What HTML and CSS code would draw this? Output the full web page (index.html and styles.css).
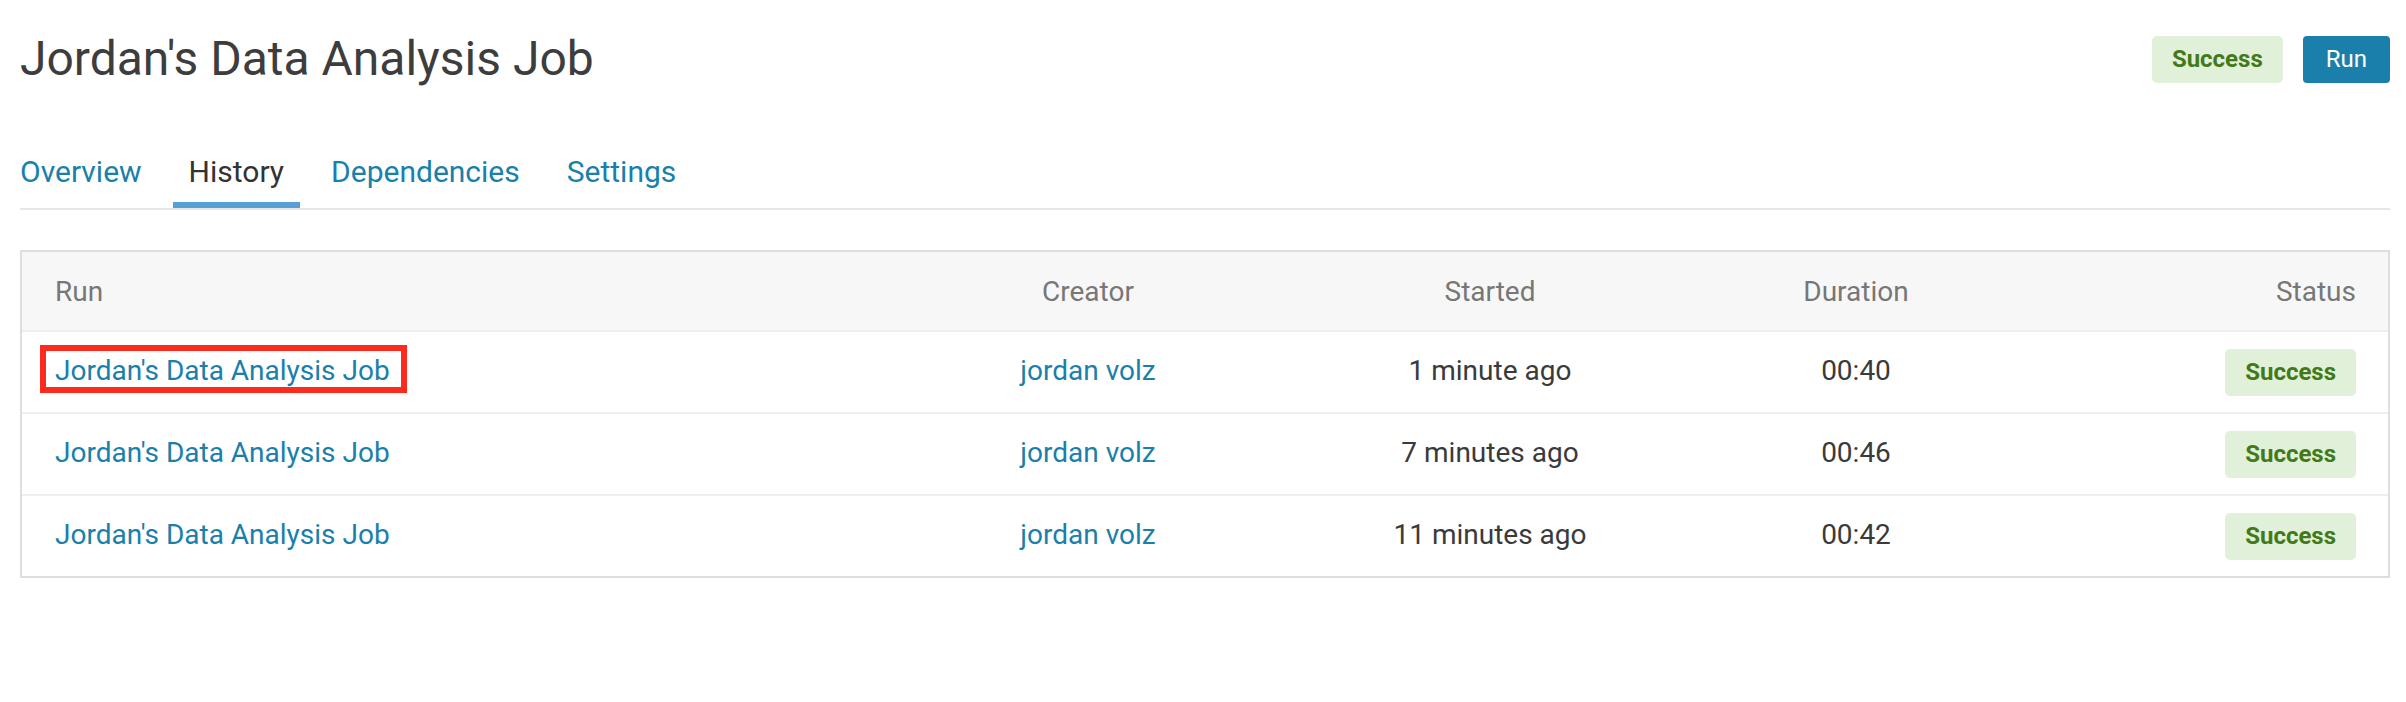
FILE: index.html
```html
<!DOCTYPE html>
<html lang="en">
<head>
<meta charset="utf-8">
<title>Jordan's Data Analysis Job</title>
<link rel="stylesheet" href="styles.css">
</head>
<body>
<div class="page">
  <header class="page-header">
    <h1 class="title">Jordan's Data Analysis Job</h1>
    <div class="actions">
      <span class="badge">Success</span>
      <button class="btn-run" type="button">Run</button>
    </div>
  </header>

  <nav class="tabs">
    <a class="tab" href="#">Overview</a>
    <a class="tab active" href="#">History</a>
    <a class="tab" href="#">Dependencies</a>
    <a class="tab" href="#">Settings</a>
  </nav>

  <div class="table">
    <div class="row head">
      <div class="cell c-run">Run</div>
      <div class="cell c-mid">Creator</div>
      <div class="cell c-mid">Started</div>
      <div class="cell c-mid">Duration</div>
      <div class="cell c-status">Status</div>
    </div>
    <div class="row">
      <div class="cell c-run"><a class="link highlighted" href="#">Jordan's Data Analysis Job</a></div>
      <div class="cell c-mid"><a class="link" href="#">jordan volz</a></div>
      <div class="cell c-mid">1 minute ago</div>
      <div class="cell c-mid">00:40</div>
      <div class="cell c-status"><span class="badge">Success</span></div>
    </div>
    <div class="row">
      <div class="cell c-run"><a class="link" href="#">Jordan's Data Analysis Job</a></div>
      <div class="cell c-mid"><a class="link" href="#">jordan volz</a></div>
      <div class="cell c-mid">7 minutes ago</div>
      <div class="cell c-mid">00:46</div>
      <div class="cell c-status"><span class="badge">Success</span></div>
    </div>
    <div class="row last">
      <div class="cell c-run"><a class="link" href="#">Jordan's Data Analysis Job</a></div>
      <div class="cell c-mid"><a class="link" href="#">jordan volz</a></div>
      <div class="cell c-mid">11 minutes ago</div>
      <div class="cell c-mid">00:42</div>
      <div class="cell c-status"><span class="badge">Success</span></div>
    </div>
  </div>
</div>
</body>
</html>
```

FILE: styles.css
```css
* { box-sizing: border-box; }

html, body {
  margin: 0;
  padding: 0;
  background: #ffffff;
}

body {
  font-family: Roboto, "Liberation Sans", Arial, sans-serif;
  color: #333333;
}

.page {
  padding: 0 16px 0 20px;
}

.page-header {
  display: flex;
  justify-content: space-between;
  align-items: center;
  padding-top: 35px;
}

.title {
  margin: 0;
  font-size: 48px;
  line-height: 48px;
  font-weight: 400;
  color: #3d3d3d;
}

.actions {
  display: flex;
  align-items: center;
  gap: 20px;
}

.badge {
  display: inline-flex;
  align-items: center;
  height: 47px;
  padding: 0 20px;
  background: #e0f0d9;
  color: #437a19;
  font-size: 24px;
  font-weight: 700;
  border-radius: 5px;
}

.btn-run {
  height: 47px;
  padding: 0 23px;
  border: none;
  border-radius: 4px;
  background: #1a7fab;
  color: #ffffff;
  font-family: Roboto, "Liberation Sans", Arial, sans-serif;
  font-size: 24px;
  font-weight: 400;
}

.tabs {
  display: flex;
  gap: 15px;
  margin-top: 74px;
  border-bottom: 2px solid #e6e6e6;
}

.tabs .tab:first-child {
  margin-left: -16px;
}

.tab {
  display: block;
  padding: 0 16px 15px;
  border-bottom: 6px solid transparent;
  font-size: 30px;
  line-height: 30px;
  color: #1a7fab;
  text-decoration: none;
}

.tab.active {
  color: #333333;
  border-bottom-color: #57a0d3;
}

.table {
  margin-top: 40px;
  border: 2px solid #dedede;
}

.row {
  display: grid;
  grid-template-columns: 866px 400px 404px 328px 1fr;
  height: 82px;
  border-bottom: 2px solid #eeeeee;
  font-size: 28px;
  color: #3a3a3a;
}

.row.last {
  height: 80px;
  border-bottom: none;
}

.row.head {
  height: 80px;
  background: #f7f7f7;
  color: #777777;
}

.cell {
  display: flex;
  align-items: center;
  padding: 0 33px;
  white-space: nowrap;
}

.row:not(.head) .c-run,
.row:not(.head) .c-mid {
  padding-bottom: 4px;
}

.c-run { justify-content: flex-start; }
.c-mid { justify-content: center; }
.c-status { justify-content: flex-end; padding-right: 32px; }

.link {
  color: #1a7fab;
  text-decoration: none;
}

.highlighted {
  position: relative;
}

.highlighted::after {
  content: "";
  position: absolute;
  left: -15px;
  right: -17px;
  top: -9px;
  bottom: -6px;
  border: 6px solid #fd2b1e;
}
```
